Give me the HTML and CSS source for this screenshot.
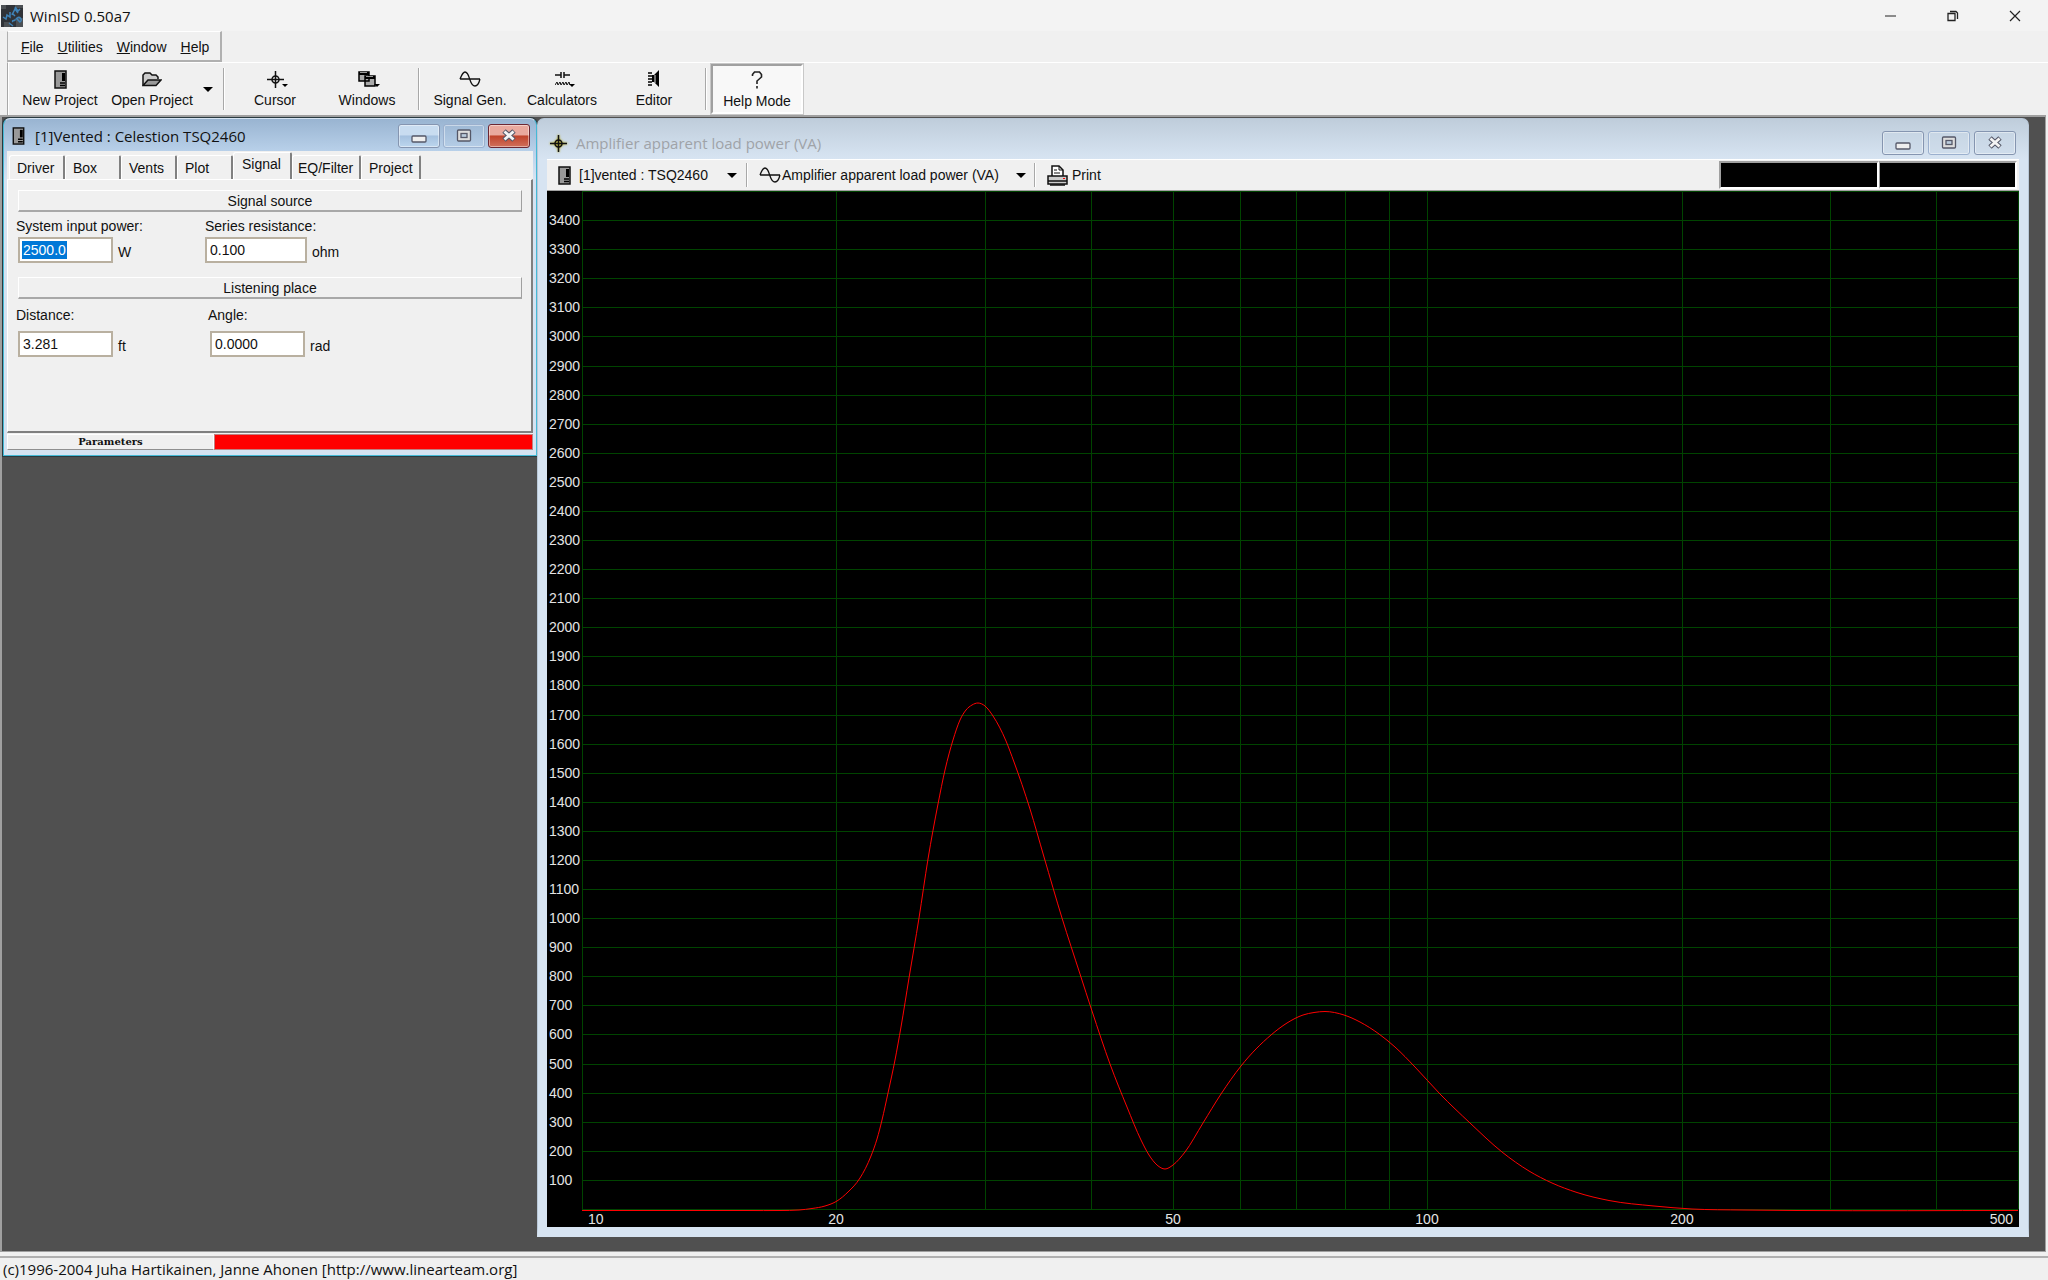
FILE: index.html
```html
<!DOCTYPE html>
<html lang="en">
<head>
<meta charset="utf-8">
<title>WinISD 0.50a7</title>
<link rel="stylesheet" href="styles.css">
</head>
<body>
<svg class="defs" width="0" height="0" aria-hidden="true">
  <symbol id="i-box" viewBox="0 0 13 19"><rect x="1" y="1" width="11" height="17" fill="#999" stroke="#111" stroke-width="1.500"/><path d="M8 3h3v8H8z" fill="#000"/><path d="M6 13h5M6 15.500h5" stroke="#000" stroke-width="1.500"/></symbol>
  <symbol id="i-open" viewBox="0 0 20 15"><path d="M1 13V3l2-2h5l2 2h4l2 2v2" fill="#ccc" stroke="#111" stroke-width="1.5"/><path d="M1 13.5 6 8h13l-5 5.500z" fill="#999" stroke="#111" stroke-width="1.500"/></symbol>
  <symbol id="i-cross" viewBox="0 0 17 17"><circle cx="8.500" cy="8.500" r="3.500" fill="none" stroke="#111" stroke-width="1.500"/><path d="M8.500 0v17M0 8.500h17" stroke="#111" stroke-width="1.500"/></symbol>
  <symbol id="i-wins" viewBox="0 0 18 16"><path d="M1 1h10v9H1zM7 5h10v10H7z" fill="#aaa" stroke="#000" stroke-width="1.500"/><path d="M1 2.500h10M7 6.500h10" stroke="#000" stroke-width="3"/><path d="M2 1.500h7M8 5.500h7" stroke="#999"/></symbol>
  <symbol id="i-sine" viewBox="0 0 22 16"><path d="M1 8h20M1 8C3 3 4 1 6 1c3 0 4 5 5 8s2 6 5 6c2 0 4-3 5-7" fill="none" stroke="#111" stroke-width="1.300"/></symbol>
  <symbol id="i-calc" viewBox="0 0 15 15"><path d="M0 3h6M9 3h6M6 0v6M9 0v6" stroke="#111" stroke-width="1.500"/><path d="M0 13l2-3 1 3 2-3 1 3 2-3 1 3 2-3 1 3 2-3 1 3" fill="none" stroke="#111"/></symbol>
  <symbol id="i-speaker" viewBox="0 0 12 18"><path d="M1 2v14M3 2v14" stroke="#000" stroke-width="1.500" stroke-dasharray="2 1"/><path d="M4 5h2l5-5v17l-5-5H4z" fill="#000"/><path d="M7 5v8" stroke="#ddd"/></symbol>
  <symbol id="i-help" viewBox="0 0 12 18"><path d="M1.500 5V3.500L3.500 1h5l2 2.500V6L6 10v3M6 15v2.500" fill="none" stroke="#222" stroke-width="1.600"/></symbol>
  <symbol id="i-print" viewBox="0 0 21 21"><path d="M5 11V1h7l4 4v6" fill="#fff" stroke="#111" stroke-width="1.500"/><path d="M12 1v4h4M7 5h3M7 8h6" fill="none" stroke="#111"/><path d="M1 11h19v8H1z" fill="#ccc" stroke="#111" stroke-width="1.500"/><path d="M1 16h19M3 20h15" stroke="#111" stroke-width="1.500"/><path d="M16 13.500h2" stroke="#f00"/></symbol>
  <symbol id="i-min" viewBox="0 0 16 14"><rect x="1" y="7" width="14" height="6" rx="1" fill="#eee" stroke="#555868" stroke-width="1.300"/></symbol>
  <symbol id="i-max" viewBox="0 0 16 14"><rect x="1.500" y="1" width="13" height="11" rx="1" fill="#ddd" stroke="#555868" stroke-width="1.300"/><rect x="5" y="4.500" width="6" height="4" fill="#bcd" stroke="#555868" stroke-width="1.300"/></symbol>
  <symbol id="i-x" viewBox="0 0 16 14"><path d="M3 2 13 11M13 2 3 11" stroke="#555868" stroke-width="5"/><path d="M3.500 2.500 12.500 10.500M12.500 2.500 3.500 10.500" stroke="#f4f4f4" stroke-width="2.800"/></symbol>
</svg>

<div class="app">
  <header class="titlebar">
    <svg class="logo" viewBox="0 0 22 22"><rect width="22" height="22" fill="#303338"/><path d="M0 0h5v4H0zM15 13h7v9h-7zM3 17h6v5H3zM14 0h8v3h-8z" fill="#4c5054"/><path d="M2 12l3 2 1-4 3 2 0-5M11 8l3 3M11 10l3-6 3 4M14 2l3 4 2-2M8 18l4 3M12 17c-2-3 3 0 2-3M15 13l4 4c3-2 0-6-3-4" fill="none" stroke="#3f83b8" stroke-width="1.500"/></svg>
    <h1 class="caption">WinISD 0.50a7</h1>
    <div class="sys">
      <button class="sys-btn" aria-label="Minimize"><svg width="12" height="12"><path d="M0 6h11" stroke="#222"/></svg></button>
      <button class="sys-btn" aria-label="Restore"><svg width="12" height="12"><path d="M1 3.500h7v7H1zM3 1.500h6l1.500 1.500v6" fill="none" stroke="#222" stroke-width="1.300"/></svg></button>
      <button class="sys-btn" aria-label="Close"><svg width="12" height="12"><path d="M1 1l10 10M11 1 1 11" stroke="#222" stroke-width="1.200"/></svg></button>
    </div>
  </header>

  <nav class="menubar">
    <button class="menu-item"><u>F</u>ile</button>
    <button class="menu-item"><u>U</u>tilities</button>
    <button class="menu-item"><u>W</u>indow</button>
    <button class="menu-item"><u>H</u>elp</button>
  </nav>

  <div class="toolbar">
    <button class="tool"><svg class="ico" width="13" height="19"><use href="#i-box"/></svg>New Project</button>
    <button class="tool"><svg class="ico" width="20" height="15"><use href="#i-open"/></svg>Open Project</button>
    <button class="tool-drop" aria-label="Recent projects"><i class="arrow"></i></button>
    <span class="sep"></span>
    <button class="tool"><svg class="ico" width="17" height="17"><use href="#i-cross"/></svg><i class="tick"></i>Cursor</button>
    <button class="tool"><svg class="ico" width="18" height="16"><use href="#i-wins"/></svg><i class="tick"></i>Windows</button>
    <span class="sep"></span>
    <button class="tool"><svg class="ico" width="22" height="16"><use href="#i-sine"/></svg>Signal Gen.</button>
    <button class="tool"><svg class="ico" width="15" height="15"><use href="#i-calc"/></svg><i class="tick"></i>Calculators</button>
    <button class="tool"><svg class="ico" width="12" height="18"><use href="#i-speaker"/></svg>Editor</button>
    <span class="sep"></span>
    <button class="tool pressed"><svg class="ico" width="12" height="18"><use href="#i-help"/></svg>Help Mode</button>
  </div>

  <main class="desktop">
    <section class="window project">
      <header class="win-title">
        <svg width="13" height="18"><use href="#i-box"/></svg>
        <h2 class="caption">[1]Vented : Celestion TSQ2460</h2>
        <div class="win-btns">
          <button class="win-btn" aria-label="Minimize"><svg width="16" height="14"><use href="#i-min"/></svg></button>
          <button class="win-btn dim" aria-label="Maximize"><svg width="16" height="14"><use href="#i-max"/></svg></button>
          <button class="win-btn close" aria-label="Close"><svg width="16" height="14"><use href="#i-x"/></svg></button>
        </div>
      </header>
      <div class="win-body">
        <div class="tabs">
          <button class="tab">Driver</button><button class="tab">Box</button><button class="tab">Vents</button><button class="tab">Plot</button><button class="tab active">Signal</button><button class="tab wide">EQ/Filter</button><button class="tab last">Project</button>
        </div>
        <div class="panel">
          <h3 class="group">Signal source</h3>
          <div class="fields">
            <div class="field">
              <label class="hang" for="power">System input power:</label>
              <div class="entry"><span class="selected"><input id="power" class="box" value="2500.0"></span><span>W</span></div>
            </div>
            <div class="field">
              <label for="rs">Series resistance:</label>
              <div class="entry"><input id="rs" class="box long" value="0.100"><span>ohm</span></div>
            </div>
          </div>
          <h3 class="group">Listening place</h3>
          <div class="fields low">
            <div class="field">
              <label class="hang" for="dist">Distance:</label>
              <div class="entry"><input id="dist" class="box" value="3.281"><span>ft</span></div>
            </div>
            <div class="field angle">
              <label class="hang" for="angle">Angle:</label>
              <div class="entry"><input id="angle" class="box" value="0.0000"><span>rad</span></div>
            </div>
          </div>
        </div>
        <footer class="params"><button class="params-btn">Parameters</button><div class="params-color"></div></footer>
      </div>
    </section>

    <section class="window graph">
      <header class="win-title">
        <svg class="gold" width="17" height="17"><use href="#i-cross"/></svg>
        <h2 class="caption">Amplifier apparent load power (VA)</h2>
        <div class="win-btns">
          <button class="win-btn" aria-label="Minimize"><svg width="16" height="14"><use href="#i-min"/></svg></button>
          <button class="win-btn dim" aria-label="Maximize"><svg width="16" height="14"><use href="#i-max"/></svg></button>
          <button class="win-btn" aria-label="Close"><svg width="16" height="14"><use href="#i-x"/></svg></button>
        </div>
      </header>
      <div class="graph-bar">
        <button class="pick source"><svg width="13" height="19"><use href="#i-box"/></svg>[1]vented : TSQ2460<i class="arrow"></i></button>
        <span class="sep"></span>
        <button class="pick plot"><svg width="22" height="16"><use href="#i-sine"/></svg>Amplifier apparent load power (VA)<i class="arrow"></i></button>
        <span class="sep"></span>
        <button class="pick print"><svg width="21" height="21"><use href="#i-print"/></svg>Print</button>
        <div class="readouts"><output class="readout"></output><output class="readout short"></output></div>
      </div>
      <svg id="chart" class="chart" viewBox="0 0 1472 1036" role="img" aria-label="Amplifier apparent load power"></svg>
    </section>
  </main>

  <footer class="status">(c)1996-2004 Juha Hartikainen, Janne Ahonen [http://www.linearteam.org]</footer>
</div>
<script src="chart.js"></script>
</body>
</html>
```

FILE: styles.css
```css
* { box-sizing: border-box; }
body { margin: 0; background: #f0f0f0; color: #111; font: 14px/18px "Liberation Sans", Arial, sans-serif; }
button { margin: 0; padding: 0; border: 0; background: none; color: inherit; font: inherit; }
h1, h2, h3 { margin: 0; font-weight: normal; }
svg { display: block; flex: none; }
.defs { position: absolute; }
.caption { font: 15px/20px "Open Sans", "Noto Sans", sans-serif; white-space: nowrap; }

.app { display: flex; flex-direction: column; height: 100vh; }

.titlebar { display: flex; align-items: center; height: 31px; padding: 0 2px 0 1px; background: #f3f3f3; }
.logo { width: 22px; height: 22px; margin-right: 7px; }
.sys { display: flex; margin-left: auto; }
.sys-btn { display: grid; place-items: center; width: 62px; height: 31px; }

.menubar { display: flex; gap: 14px; align-self: flex-start; align-items: center; height: 31px; padding: 1px 11px 0 13px; margin-left: 7px; border: solid #b0b0b0; border-width: 1px 2px 2px 1px; border-top-color: #fff; }
.toolbar { display: flex; align-items: center; height: 53px; padding-left: 6px; margin-left: 7px; border-left: 1px solid #a8a8a8; border-top: 1px solid #fff; box-shadow: inset 1px 0 #fff; }
.tool { display: grid; grid-template-rows: 23px 20px; justify-items: center; align-content: center; width: 92px; height: 50px; position: relative; }
.ico { align-self: center; }
.tick { position: absolute; left: 53px; top: 20px; border: solid transparent; border-width: 3px 3px 0; border-top-color: #000; }
.pressed { background: #f8f8f8; border: solid #fff; border-width: 2px; border-top-color: #a0a0a0; border-left-color: #a0a0a0; outline: 1px solid #c8c8c8; padding-top: 2px; }
.tool-drop { display: grid; place-items: center; width: 20px; height: 44px; }
.arrow { width: 0; height: 0; border: solid transparent; border-width: 5px 5px 0; border-top-color: #000; }
.sep { width: 1px; height: 42px; margin: 0 5px; background: #a8a8a8; box-shadow: 1px 0 #fff; }

.desktop { position: relative; flex: 1; margin-right: 2px; background: #505050; border: solid #a0a0a0; border-width: 2px 1px 1px 2px; overflow: hidden; }

.window { position: absolute; display: flex; flex-direction: column; border-radius: 7px 7px 0 0; }
.win-title { display: flex; align-items: center; }
.win-btns { display: flex; gap: 3px; margin-left: auto; }
.win-btn { display: grid; place-items: center; width: 42px; height: 24px; border: 1px solid #8595b0; border-radius: 3px; background: linear-gradient(#c8dcf0 45%, #a5c1df 50%, #bcd6ee); box-shadow: inset 0 0 0 1px #ffffff70; }
.win-btn.dim { background: transparent; border-color: #9bb0ce; }
.win-btn.close { border-color: #6c2733; background: linear-gradient(#e9a99e 45%, #c0432b 50%, #d0705c); }

.project { left: 1px; top: 1px; width: 534px; height: 338px; padding: 0 3px 5px; border: 1px solid #45b9d6; border-top-color: #d5e4f3; background: linear-gradient(#99b4d1, #b9d1ea 33px, #d5e3f2 60px); box-shadow: 0 0 0 1px #2a3a40; }
.project .win-title { height: 32px; padding: 2px 3px 0 5px; gap: 10px; }
.win-body { flex: 1; display: flex; flex-direction: column; background: #f0f0f0; }
.tabs { display: flex; align-items: flex-end; height: 28px; padding-left: 2px; }
.tab { width: 56px; height: 24px; padding-left: 7px; text-align: left; border: solid #fff; border-width: 1px 2px 0 1px; border-right-color: #808080; border-radius: 3px 2px 0 0; }
.tab.active { width: 59px; height: 27px; padding: 0 0 4px 8px; }
.tab.wide { width: 69px; padding-left: 5px; }
.tab.last { width: 60px; }
.panel { flex: 1; padding: 10px 9px 0 10px; border: solid #808080; border-width: 1px 2px 2px 1px; border-top-color: #fff; border-left-color: #fff; }
.group { height: 22px; line-height: 20px; text-align: center; font-size: 14px; border: 1px solid #fff; border-right-color: #a0a0a0; border-bottom: 2px solid #a8a8a8; }
.fields { display: flex; height: 65px; padding-top: 5px; }
.fields.low { padding-top: 7px; }
.field { width: 187px; }
.field label { display: block; margin-bottom: 2px; }
.field .hang { margin-left: -2px; }
.low .field label { margin-bottom: 7px; }
.entry { display: flex; gap: 5px; align-items: flex-start; line-height: 30px; }
.box { width: 95px; height: 26px; padding: 0 3px; border: 2px solid #b9b0a0; background: #fff; color: #111; font: inherit; line-height: 18px; }
.box.long { width: 102px; }
.selected { display: flex; }
.selected .box { color: #fff; background: linear-gradient(#0078d7, #0078d7) 2px 2px / 45px 18px no-repeat #fff; }
.angle { padding-left: 5px; }
.params { display: flex; height: 17px; padding-top: 1px; }
.params-btn { width: 207px; border: 1px solid #fff; border-bottom-color: #909090; font: bold 10px/12px "DejaVu Serif", serif; }
.params-color { flex: 1; background: #f00; border: 1px solid #c08080; }

.graph { left: 535px; right: 16px; top: 1px; bottom: 14px; padding: 0 9px; border: 1px solid #b9c8d8; border-bottom-width: 10px; border-bottom-color: #d7e4f2; background: linear-gradient(#bfcddb, #d7e4f2 40px); }
.graph .win-title { height: 40px; padding: 8px 3px 0 3px; gap: 9px; color: #9fa3a8; }
.graph .win-btns { gap: 4px; }
.graph .win-btn { background: #c9d7e566; }
.gold { filter: drop-shadow(0 0 1px #b0a000); }
.graph-bar { display: flex; align-items: center; height: 32px; padding-left: 11px; background: #f0f0f0; border-top: 1px solid #fff; border-bottom: 1px solid #a0a0a0; }
.graph-bar .sep { height: 24px; }
.pick { display: flex; align-items: center; height: 28px; white-space: nowrap; }
.pick .arrow { margin-left: auto; }
.source { width: 183px; gap: 8px; padding-right: 4px; }
.plot { width: 277px; gap: 1px; padding: 0 3px 0 7px; }
.print { gap: 4px; padding-left: 7px; }
.readouts { display: flex; margin-left: auto; padding-right: 2px; }
.readout { width: 160px; height: 28px; background: #000; border: 2px solid #fff; border-top-color: #a0a0a0; border-left-color: #a0a0a0; }
.readout.short { width: 138px; border-left-width: 1px; }
.chart { flex: 1; width: 100%; min-height: 0; background: #000; }
.grid { stroke: #004400; stroke-width: 1; fill: none; shape-rendering: crispEdges; }
.curve { stroke: #f00; stroke-width: 1; fill: none; }
.axis { fill: #e4e4e4; }
.mid { text-anchor: middle; }
.end { text-anchor: end; }

.status { height: 24px; margin-top: 4px; padding: 1px 3px; border-top: 2px solid #b0b0b0; font: 15px/20px "Open Sans", "Noto Sans", sans-serif; }
```

FILE: chart.js
```js
const chart = document.getElementById("chart");
const left = 35, right = 1471, ceiling = 0, floor = 1018;

function add(name, attrs, text) {
  const el = document.createElementNS("http://www.w3.org/2000/svg", name);
  for (const key in attrs) el.setAttribute(key, attrs[key]);
  if (text !== undefined) el.textContent = text;
  chart.append(el);
}

const xOf = hz => Math.round(left + (right - left) * Math.log10(hz / 10) / Math.log10(50));
const yOf = va => Math.round(floor - (floor - ceiling) * va / 3500);

let grid = "";
for (const hz of [10, 20, 30, 40, 50, 60, 70, 80, 90, 100, 200, 300, 400, 500]) grid += `M${xOf(hz)} ${ceiling}V${floor}`;
for (let va = 0; va <= 3500; va += 100) grid += `M${left} ${yOf(va)}H${right}`;
add("path", { class: "grid", d: grid });

for (let va = 100; va <= 3400; va += 100) add("text", { class: "axis", x: 2, y: yOf(va) + 5 }, va);
add("text", { class: "axis", x: 41, y: 1033 }, 10);
for (const hz of [20, 50, 100, 200]) add("text", { class: "axis mid", x: xOf(hz), y: 1033 }, hz);
add("text", { class: "axis end", x: 1466, y: 1033 }, 500);

const pts = [[35,1019.5],[200,1019.5],[233,1019.5],[252,1019],[265,1017.5],[278,1015],[290,1010],[301,1001],[313,987],[324,965],[330,948],[335,929],[341,902],[348,869],[354,836],[362,787],[372,727],[381,668],[391,613],[398,579],[406,549],[413,529],[419,519],[425,514],[431,512],[438,515],[446,525],[459,550],[467,571],[483,618],[497,666],[515,727],[533,783],[545,820],[563,873],[580,916],[594,949],[602,964],[610,974],[618,978],[626,974],[638,961],[656,932],[674,903],[694,875],[724,844],[740,832],[756,824],[767,821.5],[778,820.5],[797,824],[813,831],[832,843],[848,856],[868,876],[893,903],[923,932],[955,961],[982,980],[1005,992],[1030,1001.5],[1062,1009.5],[1107,1015],[1145,1018],[1196,1019],[1250,1019.5],[1471,1019.5]];

// Cubic Hermite curve; the slope at each sample weighs its two neighbouring chords
const n = pts.length - 1;
const width = i => pts[i + 1][0] - pts[i][0];
const chord = i => (pts[i + 1][1] - pts[i][1]) / width(i);
const slope = pts.map((p, i) => i === 0 || i === n ? 0 : (width(i) * chord(i - 1) + width(i - 1) * chord(i)) / (width(i) + width(i - 1)));
let d = `M${pts[0]}`;
for (let i = 0; i < n; i++) {
  const [x0, y0] = pts[i], [x1, y1] = pts[i + 1], h = width(i) / 3;
  d += `C${x0 + h} ${y0 + h * slope[i]} ${x1 - h} ${y1 - h * slope[i + 1]} ${x1} ${y1}`;
}
add("path", { class: "curve", d });
```
